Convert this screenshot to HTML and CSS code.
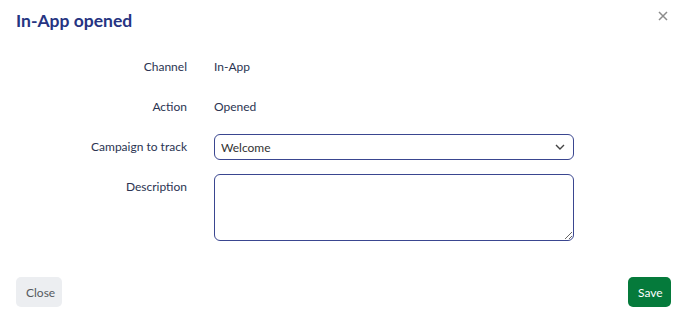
FILE: index.html
```html
<!DOCTYPE html>
<html>
<head>
<meta charset="utf-8">
<link rel="stylesheet" href="styles.css">
</head>
<body>
<div class="modal">
  <div class="header">
    <h1 class="title">In-App opened</h1>
    <button class="close-x" aria-label="Close">
      <svg width="10" height="10" viewBox="0 0 10 10"><path d="M1 1L9 9M9 1L1 9" stroke="#8c8c8c" stroke-width="1.5" fill="none"/></svg>
    </button>
  </div>
  <div class="form">
    <div class="label">Channel</div>
    <div class="value">In-App</div>
    <div class="label">Action</div>
    <div class="value">Opened</div>
    <div class="label">Campaign to track</div>
    <div class="select-wrap">
      <select class="select"><option>Welcome</option></select>
      <svg class="chevron" width="10" height="6" viewBox="0 0 10 6"><path d="M1 1L5 5L9 1" stroke="#444" stroke-width="1.4" fill="none"/></svg>
    </div>
    <div class="label">Description</div>
    <textarea class="textarea"></textarea>
  </div>
  <div class="footer">
    <button class="btn btn-close">Close</button>
    <button class="btn btn-save">Save</button>
  </div>
</div>
</body>
</html>
```
FILE: styles.css
```css
html, body {
  margin: 0;
  padding: 0;
  background: #fff;
}
body {
  font-family: "Lato", "Noto Sans", sans-serif;
  width: 689px;
  height: 323px;
  overflow: hidden;
}
.modal {
  padding: 9px 18px 0 16px;
}
.header {
  display: flex;
  justify-content: space-between;
  align-items: flex-start;
}
.title {
  margin: 0;
  font-size: 17.5px;
  line-height: 24px;
  font-weight: 700;
  color: #263482;
}
.close-x {
  border: 0;
  background: none;
  padding: 0;
  margin: 1px 2px 0 0;
  width: 12px;
  height: 12px;
  display: flex;
  align-items: center;
  justify-content: center;
}
.form {
  display: grid;
  grid-template-columns: 171px 360px;
  column-gap: 27px;
  row-gap: 14px;
  margin-top: 21px;
  font-size: 12px;
  color: #2b3452;
}
.label {
  text-align: right;
  line-height: 26px;
}
.value {
  line-height: 26px;
}
.select-wrap {
  position: relative;
  height: 26px;
}
.select {
  appearance: none;
  -webkit-appearance: none;
  width: 100%;
  height: 26px;
  box-sizing: border-box;
  border: 1px solid #3a4690;
  border-radius: 6px;
  background: #fff;
  padding: 0 6px;
  font-family: "Lato", sans-serif;
  font-size: 12px;
  color: #333;
  outline: none;
}
.chevron {
  position: absolute;
  right: 9px;
  top: 10px;
  pointer-events: none;
}
.textarea {
  width: 100%;
  height: 67px;
  box-sizing: border-box;
  border: 1px solid #3a4690;
  border-radius: 6px;
  margin: 0;
  display: block;
  font-family: "Lato", sans-serif;
  outline: none;
}
.footer {
  display: flex;
  justify-content: space-between;
  margin-top: 36px;
}
.btn {
  height: 30px;
  border: 0;
  border-radius: 5px;
  font-family: "Lato", sans-serif;
  font-size: 12px;
  padding: 0 10px;
}
.btn-close {
  width: 46px;
  background: #eceef1;
  color: #555a60;
}
.btn-save {
  width: 43px;
  background: #057a3b;
  color: #fff;
}
```
